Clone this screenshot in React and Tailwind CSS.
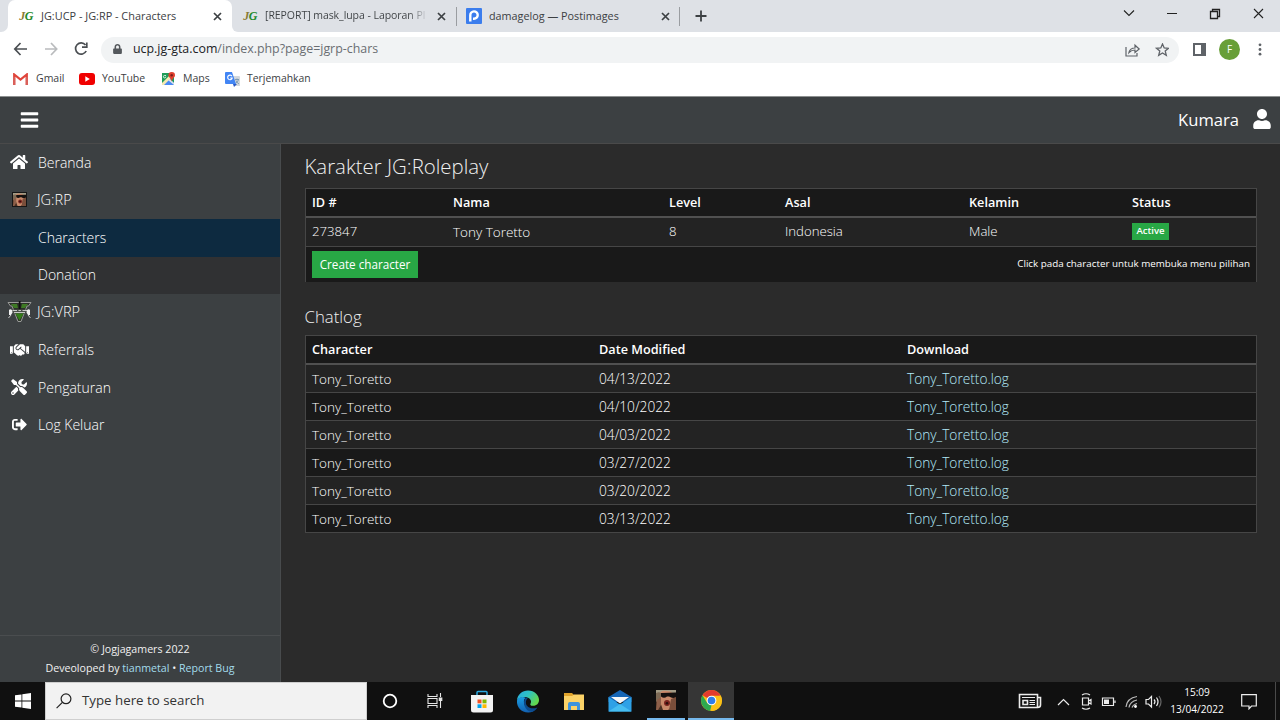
import React from 'react';
import { FaBars, FaUser, FaHome, FaHandshake, FaTools, FaSignOutAlt, FaLock } from 'react-icons/fa';

const JG = () => (
  <span className="flex w-4 shrink-0 justify-center font-['Liberation_Serif',serif] text-[12px] leading-4 font-bold italic tracking-[-0.5px]">
    <span className="text-[#8a7a35]">J</span><span className="text-[#1f8a2c]">G</span>
  </span>
);

const X = () => (
  <svg className="h-[9px] w-[9px] shrink-0" viewBox="0 0 9 9" stroke="#3c4043" strokeWidth="1.7"><path d="M1 1L8 8M8 1L1 8" /></svg>
);

const Face = ({ className }) => (
  <svg className={className} viewBox="0 0 20 20">
    <rect width="20" height="20" fill="#4a3023" />
    <path d="M0 0H20V5H0Z" fill="#a39c86" />
    <path d="M2 6Q4 0 11 1Q18 1 18 8L16 17L12 20H7Z" fill="#c98a6b" />
    <path d="M0 3Q4 1 6 4L4 9L0 12Z" fill="#7d6a55" />
    <path d="M5 3L20 2.500V7Q17 9 13 6.500L11 6.500Q8 9 5 6.500Z" fill="#15110f" />
    <path d="M1 10L5 7V15L2 20H0Z" fill="#8d5f49" />
    <path d="M15 9L20 7V20H13Z" fill="#7a4e3a" />
    <ellipse cx="11" cy="13" rx="3" ry="3" fill="#7c2520" />
    <ellipse cx="11" cy="13.200" rx="1.300" ry="1.200" fill="#2d0f0d" />
  </svg>
);

const VLogo = () => (
  <svg className="h-[22px] w-[25px]" viewBox="0 0 25 22">
    <path d="M1 1.500H24L21.500 5H20L14 20.500H11L5 5H3.500Z" fill="#2c3029" stroke="#9a9b99" strokeWidth="1" />
    <path d="M4 3H10L11 7H7Z M15 3H21L18 7H14Z" fill="#3e7a24" />
    <path d="M8 12H17L12.500 19.500Z" fill="#347d19" />
    <path d="M4.500 8.500H20.500V12.500H4.500Z" fill="#4b4f4b" />
    <path d="M5.500 9.500H10M11.500 9.500H14M15.500 9.500H20M7 11.500H18" stroke="#d8d9d6" strokeWidth=".9" />
    <path d="M2 9Q3 7.500 5 9L5.500 11.500L4 14H2Z M23 9Q22 7.500 20 9L19.500 11.500L21 14H23Z" fill="#f0f0f0" />
    <path d="M4 14L1.500 17M21 14L23.500 17" stroke="#c8c8c8" />
    <path d="M11.800 0H13.500V8H11.800Z" fill="#111" />
  </svg>
);

function Browser() {
  return (
    <div className="h-[96px] bg-white font-['Open_Sans','Noto_Sans',sans-serif] text-[#3c4043]">
      <div className="flex h-8 bg-[#dee1e6] text-[10.9px]">
        <div className="flex w-2 items-end bg-white"><span className="h-8 w-2 rounded-br-[7px] bg-[#dee1e6]" /></div>
        <div className="flex w-[224px] items-center rounded-t-[7px] bg-white pr-[10px] pl-[10px]">
          <JG />
          <span className="ml-[7px] flex-1 whitespace-nowrap">JG:UCP - JG:RP - Characters</span>
          <X />
        </div>
        <div className="flex w-[6px] items-end bg-white"><span className="h-8 w-[6px] rounded-bl-[7px] bg-[#dee1e6]" /></div>
        <div className="flex w-[218px] items-center pl-[4px]">
          <JG />
          <span className="ml-[7px] w-[163px] bg-gradient-to-r from-[#3c4043] from-88% to-transparent bg-clip-text text-[10.5px] tracking-[-0.05px] whitespace-nowrap text-transparent">[REPORT] mask_lupa - Laporan Pl</span>
          <span className="ml-[9px] flex"><X /></span>
        </div>
        <div className="mt-[7px] h-[19px] w-px bg-[#9a9da1]" />
        <div className="flex w-[222px] items-center pl-[9px]">
          <svg className="h-4 w-4" viewBox="0 0 16 16"><rect width="16" height="16" rx="1" fill="#3b7ded" /><path d="M4.300 13.500V7.200A3.700 3.700 0 1 1 8 10.800H7" fill="none" stroke="#fff" strokeWidth="2.400" /></svg>
          <span className="ml-[7px] flex-1 text-[10.8px] whitespace-nowrap">damagelog — Postimages</span>
          <span className="mr-[9px] flex"><X /></span>
        </div>
        <div className="mt-[7px] h-[19px] w-px bg-[#9a9da1]" />
        <svg className="mt-[10px] ml-[15px] h-[12px] w-[12px]" viewBox="0 0 12 12" stroke="#3c4043" strokeWidth="1.8"><path d="M6 .5V11.500M.5 6H11.500" /></svg>
        <svg className="mt-[7px] mr-[13px] ml-auto h-[14px] w-[148px]" viewBox="0 0 148 14" fill="none" stroke="#222" strokeWidth="1.1">
          <path d="M5 3.500L10 8.500L15 3.500M48 6.500H58" />
          <path d="M91.500 4.500H98.500V11.500H91.500ZM93.500 4.500V2.500H100.500V9.500H98.500" strokeWidth="1.3" />
          <path d="M135 2L144 11M144 2L135 11" />
        </svg>
      </div>
      <div className="flex h-[34px] items-center">
        <svg className="ml-[13px] h-[16px] w-[78px]" viewBox="0 0 78 16" fill="none" strokeWidth="1.7">
          <path d="M14 8H2M7.500 2L1.800 8L7.500 14" stroke="#4a4e52" />
          <path d="M32 8H43M38 2L43.700 8L38 14" stroke="#b9bbbd" />
          <path d="M72.500 4A5.600 5.600 0 1 0 73.200 10M73.800 1.500V6.200H69" stroke="#4a4e52" />
        </svg>
        <div className="mt-[1px] ml-[10px] flex h-[26px] w-[1078px] items-center rounded-full bg-[#f1f3f4] pl-3 text-[12.4px]">
          <FaLock className="mb-px h-[10px] w-[9px] text-[#54585c]" />
          <span className="ml-[11px] whitespace-nowrap text-[#6a6e72]"><span className="text-[#202124]">ucp.jg-gta.com</span>/index.php?page=jgrp-chars</span>
          <svg className="ml-auto h-[14px] w-[44px]" viewBox="0 0 44 14" fill="none" stroke="#5f6368" strokeWidth="1.2">
            <path d="M1 4V13H12V10M4 9.500Q5 5 10 5V2.200L14.200 6L10 9.500V7Q6.500 7 4 9.500Z" />
            <path d="M37.500 1L39.200 5L43.500 5.300L40.200 8L41.300 12.300L37.500 10L33.700 12.300L34.800 8L31.500 5.300L35.800 5Z" strokeWidth="1.3" />
          </svg>
          <span className="w-[10px]" />
        </div>
        <div className="ml-[14px] flex h-[13px] w-[13px] justify-end border-2 border-[#5f6368]"><span className="w-[3px] bg-[#5f6368]" /></div>
        <div className="ml-[13px] flex h-[21px] w-[21px] items-center justify-center rounded-full bg-[#689f38] text-[10px] text-white">F</div>
        <svg className="ml-[18px] h-[13px] w-1" viewBox="0 0 4 13" fill="#5f6368"><circle cx="2" cy="1.8" r="1.4" /><circle cx="2" cy="6.5" r="1.4" /><circle cx="2" cy="11.2" r="1.4" /></svg>
      </div>
      <div className="flex h-[26px] items-center pl-[13px] text-[10.5px]">
        <svg className="h-[12px] w-[15px]" viewBox="0 0 15 12"><path d="M1.200 12V1.500L7.500 6.600L13.800 1.500V12" fill="none" stroke="#e0443a" strokeWidth="2.2" /><path d="M.1 4V12H2.300V4Z" fill="#d9605a" /><path d="M12.700 4V12H14.900V4Z" fill="#d9605a" /></svg>
        <span className="ml-[8px] w-[43px]">Gmail</span>
        <svg className="h-[12px] w-[16px]" viewBox="0 0 16 12"><rect width="16" height="12" rx="3" fill="#f00000" /><path d="M6.300 3.300V8.700L10.800 6Z" fill="#fff" /></svg>
        <span className="ml-[7px] w-[59px]">YouTube</span>
        <svg className="h-[14px] w-[15px]" viewBox="0 0 15 14">
          <path d="M1 1H9L13 5V13H1Z" fill="#1e9d58" /><path d="M1 13L8 6L13 11V13Z" fill="#4a8af4" /><path d="M1 11L9 3L11 5L3 13H1Z" fill="#f5e9b0" /><path d="M9 7L13 11V13L7 8Z" fill="#dfe3e8" />
          <path d="M10.700 0A3.300 3.300 0 0 1 14 3.300C14 5.500 11.500 6 10.700 9.500C10 6 7.400 5.500 7.400 3.300A3.300 3.300 0 0 1 10.700 0Z" fill="#e0412f" /><circle cx="10.7" cy="3.3" r="1.2" fill="#7b1f1a" /><path d="M5 3.500H3.600A1.200 1.200 0 1 0 4.800 4.700" fill="none" stroke="#fff" strokeWidth=".8" />
        </svg>
        <span className="ml-[7px] w-[42px]">Maps</span>
        <svg className="h-[15px] w-[15px]" viewBox="0 0 15 15"><path d="M6 4H14Q15 4 15 5V14H9Z" fill="#d3d8dd" /><path d="M8 12L12 12L9 15Z" fill="#2b59c3" /><path d="M1 0H7L11 12H1Q0 12 0 11V1Q0 0 1 0Z" fill="#4285f4" /><path d="M7 4.300A2.300 2.300 0 1 0 7.200 6H5.200" fill="none" stroke="#fff" strokeWidth="1.1" /><path d="M10 7.500H14M12 6.500V7.500M13.500 7.500Q13 10 11 11M11 8.500Q12 11 14 12" fill="none" stroke="#6f8fa8" strokeWidth=".8" /></svg>
        <span className="ml-[7px] text-[10.4px]">Terjemahkan</span>
      </div>
    </div>
  );
}

const menu = [
  { label: 'Beranda', icon: <FaHome className="h-[16px] w-[18px]" /> },
  { label: 'JG:RP', icon: <Face className="h-[15px] w-[15px] border border-[#161616]" /> },
  { label: 'Characters', row: 'bg-[#0d2a40]' },
  { label: 'Donation', row: 'bg-[#303133]' },
  { label: 'JG:VRP', icon: <VLogo /> },
  { label: 'Referrals', icon: <FaHandshake className="h-[16px] w-[19px]" /> },
  { label: 'Pengaturan', icon: <FaTools className="h-[16px] w-[16px]" /> },
  { label: 'Log Keluar', icon: <FaSignOutAlt className="h-[15px] w-[15px]" /> },
];

function Sidebar() {
  return (
    <aside className="flex w-[281px] shrink-0 flex-col border-r border-[#484b4d] bg-[#3c4042] text-white">
      {menu.map((m) => (
        <div key={m.label} className={`flex h-[37.5px] shrink-0 items-center pb-px text-[14px] font-light ${m.row || ''}`}>
          <span className="flex w-[38px] justify-center text-white">{m.icon}</span>
          <span className={m.label.startsWith('JG') ? 'text-[14.5px] -ml-px' : ''}>{m.label}</span>
        </div>
      ))}
      <footer className="mt-auto h-[47px] border-t border-[#4a4d4f] pt-[4px] text-center text-[10.65px] leading-[19px] text-[#f1f1f1]">
        <div>© Jogjagamers 2022</div>
        <div>Deveoloped by <span className="text-[#a3dcec]">tianmetal</span> • <span className="text-[#a3dcec]">Report Bug</span></div>
      </footer>
    </aside>
  );
}

const chars = 'grid grid-cols-[141px_216px_116px_184px_163px_1fr] items-center pl-[6.5px]';
const logs = 'grid grid-cols-[287px_308px_1fr] items-center pl-[6.5px]';
const dates = ['04/13/2022', '04/10/2022', '04/03/2022', '03/27/2022', '03/20/2022', '03/13/2022'];

function Content() {
  return (
    <main className="flex-1 bg-[#2b2b2b] pr-[23px] pl-[23.5px] text-white">
      <h1 className="h-[44px] pt-[8px] text-[20.4px] leading-[28px] font-light text-[#f0f0f0]">Karakter JG:Roleplay</h1>
      <section className="border border-b-0 border-[#464646] bg-[#191919] text-[13.2px]">
        <div className={`${chars} h-[29px] border-b-2 border-[#505050] text-[12.7px] font-semibold text-white`}>
          <span>ID #</span><span>Nama</span><span>Level</span><span>Asal</span><span>Kelamin</span><span>Status</span>
        </div>
        <div className={`${chars} h-[29px] border-b border-[#464646] bg-[#232323] font-light`}>
          <span>273847</span><span className="text-[13.5px]">Tony Toretto</span><span>8</span><span>Indonesia</span><span>Male</span>
          <span className="mb-[2px] flex h-[17px] w-[37px] items-center justify-center bg-[#28a745] text-[9.6px] font-semibold text-white">Active</span>
        </div>
        <div className="flex h-[35px] items-center justify-between pr-[6px] pl-[6.5px]">
          <button className="h-[27px] w-[106px] bg-[#28a745] text-[11.7px] text-white">Create character</button>
          <span className="text-[9.8px]">Click pada character untuk membuka menu pilihan</span>
        </div>
      </section>
      <h2 className="h-[53px] pt-[23px] text-[16.8px] leading-[24px] font-light text-[#f0f0f0]">Chatlog</h2>
      <section className="border border-[#464646] bg-[#191919] text-[13.7px] font-light">
        <div className={`${logs} h-[29px] border-b-2 border-[#505050] text-[12.7px] font-semibold text-white`}>
          <span>Character</span><span>Date Modified</span><span>Download</span>
        </div>
        {dates.map((d) => (
          <div key={d} className={`${logs} h-[28px] border-b border-[#464646] pt-px last:h-[27px] last:border-b-0 odd:bg-[#191919] even:bg-[#232323]`}>
            <span className="text-[13.5px]">Tony_Toretto</span><span>{d}</span><span className="text-[#b4ebfa]">Tony_Toretto.log</span>
          </div>
        ))}
      </section>
    </main>
  );
}

const Slot = ({ className = '', children }) => <div className={`flex h-[38px] w-[46px] items-center justify-center ${className}`}>{children}</div>;

function Taskbar() {
  return (
    <div className="flex h-[38px] shrink-0 bg-[#101010] text-white">
      <div className="flex w-[45px] items-center justify-center">
        <svg className="h-[16px] w-[16px]" viewBox="0 0 16 16" fill="#fff"><path d="M0 2.300L6.500 1.400V7.600H0ZM7.300 1.300L16 0V7.600H7.300ZM0 8.400H6.500V14.600L0 13.700ZM7.300 8.400H16V16L7.300 14.700Z" /></svg>
      </div>
      <div className="flex w-[322px] items-center border border-[#cfcfcf] bg-[#f2f2f2] pl-[10px] text-[13.3px] text-[#333]">
        <svg className="h-[16px] w-[16px]" viewBox="0 0 16 16" fill="none" stroke="#222" strokeWidth="1.2"><circle cx="10" cy="5.8" r="4.9" /><path d="M6.400 9.400L.6 15.200" /></svg>
        <span className="ml-[10px]">Type here to search</span>
      </div>
      <div className="flex">
        <Slot className="pr-px"><svg className="h-4 w-4" viewBox="0 0 16 16"><circle cx="8" cy="8" r="6.3" fill="none" stroke="#fff" strokeWidth="1.8" /></svg></Slot>
        <Slot className="pr-[2px]"><svg className="h-4 w-4" viewBox="0 0 16 16" fill="none" stroke="#e6e6e6" strokeWidth="1.1"><path d="M1 1V3.500H10V1M1 15V12.500H10V15M1 5.500H10V10.500H1ZM13.500 0V4M13.500 8V15" /><path d="M12.300 5H14.800V7.500H12.300Z" fill="#e6e6e6" /></svg></Slot>
        <Slot><svg className="h-[23px] w-[24px]" viewBox="0 0 24 23"><path d="M7 6V2.500Q7 1.500 8 1.500H16Q17 1.500 17 2.500V6" fill="none" stroke="#29a8e0" strokeWidth="1.5" /><path d="M1 5H23V20Q23 22.500 20.500 22.500H3.500Q1 22.500 1 20Z" fill="#f3f3f3" /><path d="M7.500 9.500H11.500V13.300H7.500Z" fill="#f25022" /><path d="M12.500 9.500H16.500V13.300H12.500Z" fill="#7fba00" /><path d="M7.500 14.300H11.500V18H7.500Z" fill="#00a4ef" /><path d="M12.500 14.300H16.500V18H12.500Z" fill="#ffb900" /></svg></Slot>
        <Slot><svg className="h-[23px] w-[24px]" viewBox="0 0 24 24">
          <defs><linearGradient id="eg" x1="0" y1="0" x2="1" y2=".5"><stop offset="0" stopColor="#27a9e1" /><stop offset=".5" stopColor="#2fc2c4" /><stop offset="1" stopColor="#62d84e" /></linearGradient><linearGradient id="eb" x1="0" y1="0" x2="0" y2="1"><stop offset="0" stopColor="#1b9de2" /><stop offset="1" stopColor="#1260b0" /></linearGradient></defs>
          <path d="M.5 11C1 4.500 6 .5 12 .5C19 .5 23.500 5.500 23.500 10.500C23.500 14 21 16.500 17.500 16.500C14.500 16.500 14 15 14.700 14C16 12 15 8.500 10.500 7.500C6 6.800 2 8.500 .5 11Z" fill="url(#eg)" />
          <path d="M.5 11C2 7.500 6 6.500 9.500 8C8 9 7.500 11 7.800 13C8.500 18 14 21.500 20 19.500C18 22.500 15 23.700 12 23.500C5 23.300 0 18 .5 11Z" fill="url(#eb)" />
          <path d="M9.500 8C6 12 8 22 16 22.700C18.500 22 20.500 20.500 21.800 18.200C16 20.700 10.300 18 9.800 13.500C9.600 11 10.700 9.500 11.800 8.500Z" fill="#0c4a8c" />
        </svg></Slot>
        <Slot><svg className="h-[19px] w-[22px]" viewBox="0 0 22 19"><path d="M1 1H9L11 3H21V6H1Z" fill="#e0a32b" /><path d="M1 4H9L11 2.500H21V18H1Z" fill="#fbd267" /><path d="M5 18V12Q5 10 7 10H15Q17 10 17 12V18H14V14H8V18Z" fill="#3d93dc" /></svg></Slot>
        <Slot><svg className="h-[22px] w-[24px]" viewBox="0 0 24 22"><path d="M.5 7L12 0L23.500 7V12H.5Z" fill="#1565b5" /><path d="M.5 7L12 14.500L23.500 7V21.500H.5Z" fill="#2ea1e6" /><path d="M3 7H21L12 13.500Z" fill="#f7f7f7" /><path d="M.5 21.500L12 14L23.500 21.500Z" fill="#46bdf0" /></svg></Slot>
        <Slot><div className="flex h-[38px] w-[38px] items-center justify-center border-b-2 border-[#76b9ed]"><Face className="h-[20px] w-[20px]" /></div></Slot>
        <Slot className="-ml-px border-b-2 border-[#76b9ed] bg-[#363636]"><svg className="h-[21px] w-[21px]" viewBox="0 0 22 22"><circle cx="11" cy="11" r="11" fill="#fbc116" /><path d="M11 11L1.500 5.500A11 11 0 0 1 20.500 5.500Z" fill="#e33b2e" /><path d="M1.500 5.500L6.500 13.500L11 16L9.500 21.900A11 11 0 0 1 1.500 5.500Z" fill="#2da94f" /><path d="M11 6H20.800A11 11 0 0 1 11 22L15.500 13.500Z" fill="#fbc116" /><circle cx="11" cy="11" r="5.100" fill="#fff" /><circle cx="11" cy="11" r="4" fill="#2f7de9" /></svg></Slot>
      </div>
      <svg className="mt-[10px] ml-auto h-[20px] w-[145px]" viewBox="0 0 145 20" fill="none" stroke="#ececec" strokeWidth="1.200">
        <path d="M1.500 2.500H19.500V15.500H1.500ZM19.500 5.500H22.500V13Q22.500 15.500 19.500 15.500" strokeWidth="1.600" /><path d="M4 5.500H17M11.500 8.500H17M11.500 10.500H17M11.500 12.500H17" /><path d="M5 8.500H9.500V12.500H5Z" strokeWidth="1.600" />
        <path d="M40 13L45.500 7.500L51 13" />
        <path d="M64.500 6H70.500V13H64.500ZM70.500 9L73 7.500V12L70.500 10.500M64 3Q68 .5 72 3M64 16Q68 18.500 72 16" />
        <path d="M84.500 6H95.500V13.500H84.500ZM97 8.500V11" /><path d="M86 7.500H91V12H86Z" fill="#ececec" stroke="none" />
        <path d="M108 15Q109 6 119 4.500M111 15.500Q112 9.500 119 8M114 15.500Q115 12.500 119 11.500" stroke="#b9b9b9" /><circle cx="117.500" cy="14.500" r="1.400" fill="#fff" stroke="none" />
        <path d="M128 7.500H130.500L133.500 4.500V15L130.500 12H128ZM136 7.500Q138 9.700 136 12M138.500 5.500Q141.500 9.700 138.500 14" /><path d="M141 4Q145 9.700 141 15.500" stroke="#666" />
      </svg>
      <div className="ml-px w-[66px] pt-[2px] text-center text-[10.1px] leading-[17px]"><div>15:09</div><div>13/04/2022</div></div>
      <svg className="mt-[12px] ml-[11px] h-[16px] w-[16px]" viewBox="0 0 16 16" fill="none" stroke="#eee" strokeWidth="1.200"><path d="M.7 .7H15.300V12H10.500L8 14.800V12H.7Z" /></svg>
      <div className="ml-[18px] w-[5px] border-l border-[#4a4a4a]" />
    </div>
  );
}

export default function App() {
  return (
    <div className="flex h-[720px] w-[1280px] flex-col overflow-hidden font-['Open_Sans','Noto_Sans',sans-serif]">
      <Browser />
      <header className="flex h-[48px] shrink-0 items-center justify-between border-t border-b border-t-[#8d9090] border-b-[#4a4a4a] bg-[#3c4042] pr-[9px] pl-[20px] text-white">
        <FaBars className="mb-px h-[20px] w-[19px]" />
        <div className="flex items-center text-[16.6px]"><span className="pt-px">Kumara</span><FaUser className="mb-px ml-[14px] h-[20px] w-[18px]" /></div>
      </header>
      <div className="flex min-h-0 flex-1"><Sidebar /><Content /></div>
      <Taskbar />
    </div>
  );
}
